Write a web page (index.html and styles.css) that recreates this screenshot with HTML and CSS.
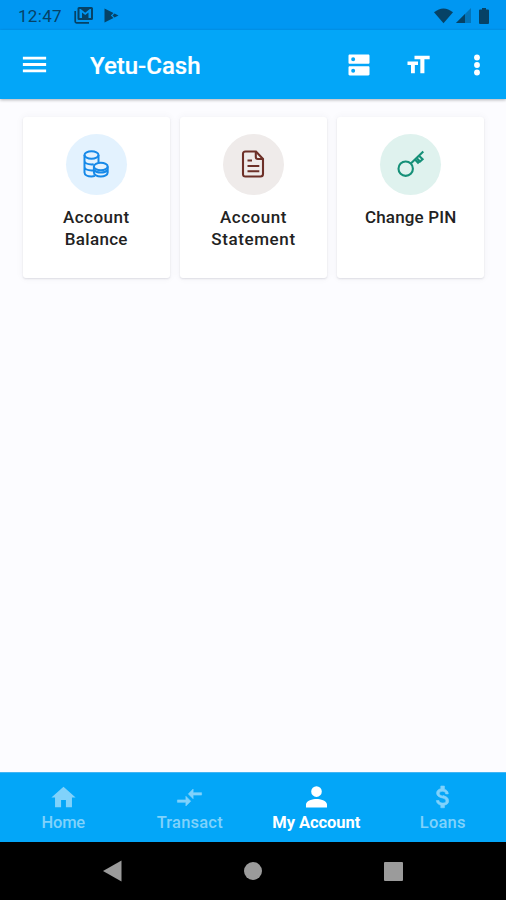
FILE: index.html
```html
<!DOCTYPE html>
<html lang="en">
<head>
<meta charset="utf-8">
<title>Yetu-Cash</title>
<link rel="stylesheet" href="styles.css">
</head>
<body>
<div class="screen">
  <div class="status">
    <span class="clock">12:47</span>
    <svg class="mail" viewBox="0 0 20 17"><path d="M1.2 4v10.500q0 1.300 1.300 1.300H15" fill="none" stroke="currentColor" stroke-width="1.700"/><path fill="currentColor" fill-rule="evenodd" d="M5 0h12.500q1.500 0 1.500 1.500v10q0 1.500-1.500 1.500H5q-1.500 0-1.500-1.500v-10Q3.500 0 5 0zM5.500 2v9H8V5.500l3.200 2.600 3.300-2.600V11H17V2h-1.200l-4.600 3.700L6.700 2z"/></svg>
    <svg class="play" viewBox="0 0 15 15"><path fill="currentColor" d="M.5.500 9.500 5 6.800 7.500 9.500 10 .5 14.500z"/><path fill="currentColor" d="m10.500 5.600 4 1.900-4 1.900-2-1.900z"/></svg>
    <span class="grow"></span>
    <svg class="wifi" viewBox="0 0 20 16"><path fill="currentColor" d="M0 4q10-8 20 0L10 15.500z"/></svg>
    <svg class="signal" viewBox="0 0 15 15"><path fill="currentColor" opacity=".4" d="M15 0v15H0z"/><path fill="currentColor" d="M9 6v9H0z"/></svg>
    <svg class="battery" viewBox="0 0 10 16"><path fill="currentColor" d="M3 0h4v1.500h2q1 0 1 1V15q0 1-1 1H1q-1 0-1-1V2.500q0-1 1-1h2z"/></svg>
  </div>
  <header class="bar">
    <svg class="menu" viewBox="0 0 24 24"><path fill="currentColor" d="M3 18h18v-2.200H3zM3 13.100h18v-2.200H3zM3 6v2.200h18V6z"/></svg>
    <h1>Yetu-Cash</h1>
    <span class="grow"></span>
    <svg class="dns" viewBox="0 0 24 24"><path fill="currentColor" d="M20 13H4c-.55 0-1 .45-1 1v6c0 .55.45 1 1 1h16c.55 0 1-.45 1-1v-6c0-.55-.45-1-1-1zM7 18.700a1.700 1.700 0 1 1 0-3.400 1.700 1.700 0 0 1 0 3.400zM20 3H4c-.55 0-1 .45-1 1v6c0 .55.45 1 1 1h16c.55 0 1-.45 1-1V4c0-.55-.45-1-1-1zM7 8.700a1.700 1.700 0 1 1 0-3.400 1.700 1.700 0 0 1 0 3.400z"/></svg>
    <svg class="size" viewBox="0 0 24 24"><path fill="currentColor" d="M9 4v3h5v12h3.500V7H22V4zM3 12h3v7h3.300v-7H12V9H3z"/></svg>
    <svg class="more" viewBox="0 0 24 24"><g fill="currentColor"><circle cx="12" cy="5.600" r="2.500"/><circle cx="12" cy="12" r="2.500"/><circle cx="12" cy="18.400" r="2.500"/></g></svg>
  </header>
  <main class="cards">
    <section class="card">
      <div class="disc blue"><svg viewBox="0 0 26 28"><g fill="none" stroke="currentColor" stroke-width="2"><ellipse cx="8.500" cy="5" rx="7" ry="3.700"/><path d="M1.500 5v17.500c0 2.300 3 3.900 7 3.900 1.200 0 2.400-.2 3.400-.5M15.500 5v7M1.500 10.800c0 2.200 3.100 3.700 7 3.700.8 0 1.500 0 2.200-.2M1.500 16.700c0 2.200 3.100 3.700 7 3.700h1.500"/><ellipse cx="17.800" cy="16.500" rx="6.900" ry="3.700"/><path d="M10.900 16.500v6c0 2.200 3 3.900 6.900 3.900s6.900-1.700 6.900-3.900v-6M11.500 20.500c1 1.200 3.400 2 6.300 2s5.300-.8 6.300-2"/></g></svg></div>
      <p><span class="t1">Account</span><br><span class="t2">Balance</span></p>
    </section>
    <section class="card">
      <div class="disc brown"><svg viewBox="-1 0 26 28"><g fill="none" stroke="currentColor" stroke-width="2.100"><path d="M4.500 1.500H15l7 7.500v15q0 2.500-2.500 2.500h-15Q2 26.500 2 24V4q0-2.500 2.500-2.500z"/><path d="M14.800 1.500V7q0 2 2 2H22M6.500 10.500H11M6.500 16h11.800M6.500 21.200h11.800"/></g></svg></div>
      <p><span class="t1">Account</span><br><span class="t3">Statement</span></p>
    </section>
    <section class="card">
      <div class="disc green"><svg viewBox="0 0 28 28"><g fill="none" stroke="currentColor" stroke-width="2.100"><circle cx="8.700" cy="18.700" r="7.200"/><path d="M13.800 13.600 26.300 1.500M18 9.500l3 3.200 2.200-2.200M22 5.700l3.600 3.500-2.600 2.300-2.700-2.800"/></g></svg></div>
      <p><span class="t4">Change PIN</span></p>
    </section>
  </main>
  <nav class="tabs">
    <a class="tab"><svg viewBox="0 0 24 24"><path fill="currentColor" d="M10 20v-6h4v6h5v-8h3L12 3 2 12h3v8z"/></svg><span class="home">Home</span></a>
    <a class="tab"><svg viewBox="0 0 24 24"><path fill="currentColor" stroke="currentColor" stroke-width=".5" d="M9.010 14H2v2h7.010v3L13 15l-3.990-4zm5.980-1v-3H22V8h-7.010V5L11 9z"/></svg><span class="transact">Transact</span></a>
    <a class="tab active"><svg viewBox="0 0 24 24"><path fill="currentColor" d="M12 11.500a4.400 4.400 0 1 0 0-8.800 4.400 4.400 0 0 0 0 8.800zm0 1.800c-3 0-8.700 1.500-8.700 4.500v2.500h17.400v-2.500c0-3-5.700-4.500-8.700-4.500z"/></svg><span class="account">My Account</span></a>
    <a class="tab"><svg viewBox="0 0 24 24"><path fill="currentColor" stroke="currentColor" stroke-width=".5" transform="translate(.6 0)" d="M11.800 10.900c-2.270-.59-3-1.200-3-2.150 0-1.090 1.010-1.850 2.700-1.850 1.780 0 2.440.85 2.500 2.100h2.210c-.07-1.720-1.120-3.300-3.210-3.810V2.500h-3v2.160c-1.940.42-3.500 1.680-3.500 3.610 0 2.310 1.910 3.460 4.700 4.130 2.500.6 3 1.480 3 2.410 0 .69-.49 1.790-2.700 1.790-2.060 0-2.870-.92-2.980-2.100H6.320c.12 2.190 1.760 3.420 3.680 3.830v2.170h3v-2.150c1.950-.37 3.500-1.500 3.500-3.550 0-2.840-2.430-3.810-4.700-4.400z"/></svg><span class="loans">Loans</span></a>
  </nav>
  <footer class="system">
    <svg viewBox="0 0 20 22"><path fill="currentColor" d="M18.500.5v21L0 11z"/></svg>
    <span class="dot"></span>
    <span class="square"></span>
  </footer>
</div>
</body>
</html>
```
FILE: styles.css
```css
* { box-sizing: border-box; }
body { margin: 0; font-family: Roboto, "Liberation Sans", sans-serif; background: #fcfcff; }
svg { display: block; flex: none; }
.screen { width: 506px; height: 900px; display: flex; flex-direction: column; overflow: hidden; }
.grow { flex: 1; }

.status { height: 30px; background: #0097f2; color: #064266; display: flex; align-items: center; padding: 1px 17px 0 18px; }
.clock { font-size: 17px; line-height: 20px; width: 56px; letter-spacing: .3px; }
.mail { width: 20px; height: 17px; }
.play { width: 15px; height: 15px; margin-left: 10px; }
.wifi { width: 19px; height: 16px; }
.signal { width: 15px; height: 15px; margin-left: 3px; }
.battery { width: 10px; height: 16px; margin-left: 8px; }

.bar { height: 69px; background: #03a6f8; color: #fff; display: flex; align-items: center; padding: 0 15px 0 19px; box-shadow: 0 1px 3px rgba(0,0,0,.3); z-index: 1; }
.menu { width: 31px; height: 31px; }
.bar h1 { margin: 3px 0 0 40px; font-size: 24px; line-height: 30px; font-weight: 500; -webkit-text-stroke: .2px; }
.dns { width: 28px; height: 28px; }
.size { width: 28px; height: 28px; margin-left: 31px; }
.more { width: 28px; height: 28px; margin-left: 31px; }

.cards { flex: 1; display: grid; grid-template-columns: repeat(3, 147px); grid-auto-rows: 161px; gap: 10.200px; padding: 18px 0 0 22.800px; }
.card { background: #fff; border-radius: 3px; box-shadow: 0 1px 2px rgba(60,60,80,.14), 0 0 8px rgba(60,60,80,.05); display: flex; flex-direction: column; align-items: center; padding-top: 16.500px; }
.card p { margin: 11px 0 0; font-size: 17px; line-height: 22.500px; font-weight: 500; color: #222; text-align: center; white-space: nowrap; }
.disc { width: 61px; height: 61px; border-radius: 50%; display: grid; place-items: center; }
.disc svg { width: 26px; height: 28px; }
.blue { background: #e3f2fe; color: #1689e8; }
.brown { background: #efebea; color: #6d3028; }
.green { background: #dff2ee; color: #159078; }
.green svg { width: 28px; }
.t1 { letter-spacing: .5px; }
.t2 { letter-spacing: .3px; }
.t3 { letter-spacing: .6px; }
.t4 { letter-spacing: .15px; }

.tabs { height: 70px; background: #03a6f8; border-top: 1px solid #42b5f4; display: grid; grid-template-columns: repeat(4, 1fr); color: #80d2fb; }
.tab { display: flex; flex-direction: column; align-items: center; padding-top: 10px; font-size: 16.500px; line-height: 22px; font-weight: 500; white-space: nowrap; }
.tab svg { width: 29px; height: 29px; }
.active { color: #fff; font-weight: 700; }
.home { letter-spacing: -.2px; }
.transact { letter-spacing: .2px; }
.account { letter-spacing: -.05px; }
.loans { letter-spacing: .2px; }

.system { height: 58px; background: #000; color: #9b9b9b; display: flex; align-items: center; padding-left: 103px; }
.system svg { width: 20px; height: 22px; }
.dot { width: 18px; height: 18px; border-radius: 50%; background: currentColor; margin-left: 121px; }
.square { width: 19px; height: 19px; border-radius: 1px; background: currentColor; margin-left: 122px; }
```
